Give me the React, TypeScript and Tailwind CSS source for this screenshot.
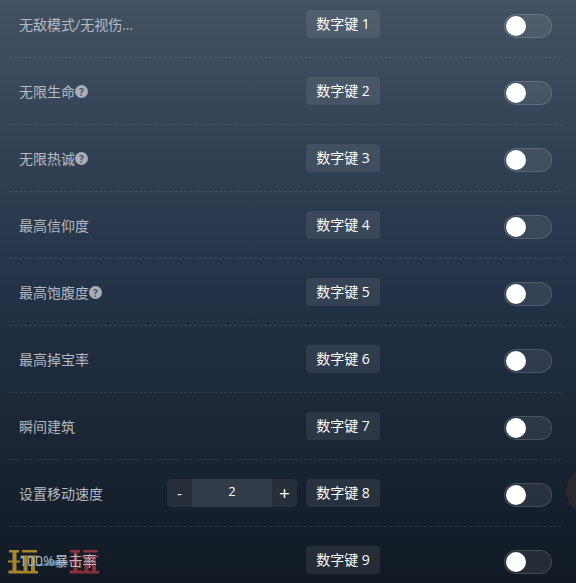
const font = { fontFamily: '"Open Sans", "Noto Sans CJK SC", "Liberation Sans", sans-serif' };

const rows: { label: string; key: string; help?: boolean; stepper?: boolean }[] = [
  { label: "无敌模式/无视伤...", key: "1" },
  { label: "无限生命", key: "2", help: true },
  { label: "无限热诚", key: "3", help: true },
  { label: "最高信仰度", key: "4" },
  { label: "最高饱腹度", key: "5", help: true },
  { label: "最高掉宝率", key: "6" },
  { label: "瞬间建筑", key: "7" },
  { label: "设置移动速度", key: "8", stepper: true },
  { label: "100%暴击率", key: "9" },
];

function LogoMark({ color }: { color: string }) {
  return (
    <svg width="30" height="24" viewBox="0 0 30 24" fill={color}>
      <rect x="1" y="0" width="10" height="2.500" />
      <rect x="4.500" y="0" width="4" height="22" />
      <rect x="0" y="10.500" width="12" height="2" />
      <rect x="0.500" y="20.500" width="13" height="3" />
      <rect x="14" y="0" width="15" height="2.500" />
      <rect x="12.500" y="5.500" width="17" height="2" />
      <rect x="15.500" y="6" width="4" height="15" />
      <rect x="23" y="6" width="4" height="15" />
      <rect x="13" y="21" width="9" height="2.500" />
      <rect x="21" y="21" width="9" height="2.500" />
    </svg>
  );
}

function Logo() {
  return (
    <div className="absolute left-[8px] top-[550px] flex gap-[31px] opacity-75">
      <LogoMark color="#d9a92a" />
      <LogoMark color="#b5383e" />
    </div>
  );
}

function Stepper() {
  return (
    <div className="flex h-[28px] w-[130px] overflow-hidden rounded-[4px] bg-[#262f3a] text-white">
      <span className="flex w-[25px] items-center justify-center text-[14px]">-</span>
      <span className="flex w-[80px] items-center justify-center bg-[#323c48] pb-[2px] text-[13px]">2</span>
      <span className="flex w-[25px] items-center justify-center text-[19px] leading-none">+</span>
    </div>
  );
}

function Row({ label, keyName, help, stepper }: { label: string; keyName: string; help?: boolean; stepper?: boolean }) {
  return (
    <div className="flex h-[67px] items-center border-b border-dashed border-[#ffffff1c] pl-[10px] last:border-transparent">
      <div className="flex w-[287px] items-center justify-between pr-[9px]">
        <div className="flex items-center pt-[1px] text-[14px] leading-[20px] text-[#b4bbc3]">
          <span>{label}</span>
          {help && (
            <span className="flex h-[13px] w-[13px] items-center justify-center rounded-full bg-[#a8aeb8] text-[10px] leading-none font-bold text-[#48525f]">?</span>
          )}
        </div>
        {stepper && <Stepper />}
      </div>
      <div className="flex h-[28px] w-[74px] items-center justify-center rounded-[4px] bg-[#ffffff14] pb-[2px] text-[14px] whitespace-pre text-white">
        数字键 {keyName}
      </div>
      <div className="ml-[124px] mt-[4px] flex h-[24px] w-[48px] items-center rounded-full border border-[#ffffff24] bg-[#ffffff14] pl-[1px]">
        <span className="h-[20px] w-[20px] rounded-full bg-white" />
      </div>
    </div>
  );
}

export default function App() {
  return (
    <div className="relative h-[583px] w-[576px] overflow-hidden bg-gradient-to-b from-[#425263] via-[#233246] to-[#111a24]" style={font}>
      <Logo />
      <svg className="absolute left-[20px] top-[558px]" width="50" height="10" viewBox="0 0 50 10">
        <polygon points="0,8 22,6 36,2 48,3 46,7 24,8" fill="#4b88b8" opacity="0.75" />
      </svg>
      <div className="relative mx-[9px] mt-[-9px] w-[553px]">
        {rows.map((r) => (
          <Row key={r.key} label={r.label} keyName={r.key} help={r.help} stepper={r.stepper} />
        ))}
      </div>
      <div className="absolute left-[566px] top-[469px] h-[44px] w-[44px] rounded-full bg-[#2a2a2c]" />
    </div>
  );
}
